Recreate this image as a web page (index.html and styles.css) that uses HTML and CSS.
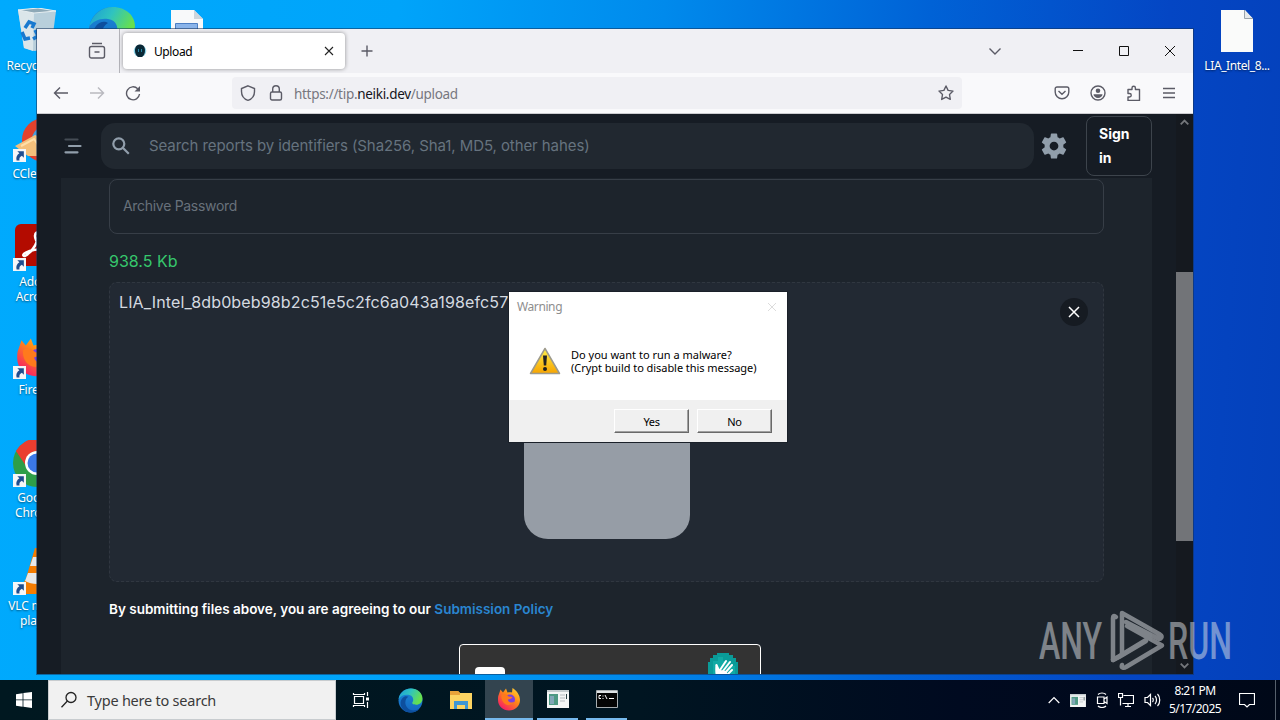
FILE: index.html
```html
<!DOCTYPE html>
<html lang="en">
<head>
  <meta charset="UTF-8" />
  <meta name="viewport" content="width=device-width, initial-scale=1" />
  <title>Upload</title>
  <link rel="stylesheet" href="styles.css">
</head>
<body>
  <svg width="0" height="0" class="defs">
    <defs>
      <linearGradient id="edgeGreen" x1="0" y1="0" x2="1" y2="0.4">
        <stop offset="0" stop-color="#1a9bd8" /><stop offset="0.5" stop-color="#2fc3c0" /><stop offset="1" stop-color="#67e04e" />
      </linearGradient>
      <linearGradient id="edgeBlue" x1="0" y1="0" x2="0" y2="1">
        <stop offset="0" stop-color="#1a8ad8" /><stop offset="1" stop-color="#1565c0" />
      </linearGradient>
      <linearGradient id="fire" x1="1" y1="0" x2="0.2" y2="1">
        <stop offset="0" stop-color="#ffe13a" /><stop offset="0.45" stop-color="#ff8a16" /><stop offset="1" stop-color="#f5156c" />
      </linearGradient>
      <linearGradient id="warn" x1="0" y1="0" x2="0" y2="1">
        <stop offset="0" stop-color="#fff04a" /><stop offset="1" stop-color="#f7a400" />
      </linearGradient>
      <symbol id="edge" viewBox="0 0 48 48">
        <circle cx="24" cy="24" r="23" fill="url(#edgeBlue)" />
        <path d="M1 21C4 8 14 1 25 1c13 0 22 9 22 19 0 8-6 12-12 12-6 0-9-2-7-5 3-4 1-13-8-14C12 12 5 15 1 21z" fill="url(#edgeGreen)" />
        <path d="M20 17c-7 4-8 14-2 21 5 6 15 7 23 2-7 9-20 9-29 3C4 37 3 26 8 20c4-5 9-5 12-3z" fill="#0d4f9e" />
      </symbol>
      <symbol id="firefox" viewBox="0 0 48 48">
        <path d="M4 14l3-9 5 6 6-8 3 8c4-1 7-1 9 0l1-9c8 5 15 14 15 24 0 12-10 21-22 21S2 38 2 26c0-5 0-8 2-12z" fill="url(#fire)" />
        <circle cx="26" cy="25" r="10" fill="#7a3fe0" />
        <path d="M9 16c6-3 11-1 14 3l8 1c-2 4-6 4-9 5 0 5 6 8 13 4-3 7-13 10-20 4-5-4-7-11-6-17z" fill="#ff7a1c" />
      </symbol>
      <symbol id="shortcut" viewBox="0 0 12 12">
        <path d="M0 0h12v12H0z" fill="#f4f6f8" />
        <path d="M4 2h6v6L8.200 6.200C6 7.400 5.700 8.700 6 10.500H3.300C2.500 7.500 3.700 5.500 5.900 4z" fill="#1f4d8f" />
      </symbol>
      <symbol id="appwin" viewBox="0 0 22 18">
        <path d="M0 0h22v18H0z" fill="#f4f6f6" />
        <path d="M0 0h22v2H0z" fill="#c5cdd0" />
        <path d="M2 4h9v11H2z" fill="#4e9a84" />
        <path d="M3 6h4v8H3z" fill="#82a7b8" />
        <path d="M13 5h5M13 8h5M13 11h5" stroke="#b7bcc0" />
        <path d="M19.500 4v5" stroke="#30464a" />
      </symbol>
    </defs>
  </svg>

  <div class="desktop">
    <div class="icons">
      <div class="shortcut">
        <svg width="48" height="48" viewBox="0 0 48 48">
          <path d="M5 2l20-2 18 3-5 38-17 2-10-3z" fill="#b8cfdb" />
          <path d="M5 2l16 3-1 38-9-3z" fill="#dbe6ea" />
          <path d="M5 2l20-2 18 3-22 2z" fill="#8ea9b7" stroke="#e7eff2" />
          <path d="M12 20l4-6 5 2-2 4M9 24l3 7 5-1M22 22l3 6-5 3" fill="none" stroke="#1879cf" stroke-width="3.500" />
        </svg>
        <span>Recycle Bin</span>
      </div>
      <div class="shortcut">
        <svg width="48" height="48" viewBox="0 0 48 48">
          <circle cx="31" cy="24" r="22" fill="#e2412c" />
          <circle cx="33" cy="24" r="14" fill="#4a9fdb" />
          <path d="M2 30l20-11 15 6v15H15z" fill="#f4c07b" />
          <path d="M8 30l13-7 5 7" fill="none" stroke="#ffdfa8" stroke-width="2" />
          <use href="#shortcut" x="0" y="33" width="13" height="13" />
        </svg>
        <span>CCleaner</span>
      </div>
      <div class="shortcut">
        <svg width="48" height="48" viewBox="0 0 48 48">
          <rect x="2" width="46" height="42" rx="6" fill="#b30b00" />
          <path d="M24 8c-5 3 0 12 8 22M24 8c4 8-5 20-12 24-5 0 0-7 22-7" fill="none" stroke="#fff" stroke-width="2.500" />
          <use href="#shortcut" x="0" y="34" width="13" height="13" />
        </svg>
        <span>Adobe<br>Acrobat</span>
      </div>
      <div class="shortcut">
        <svg width="48" height="48" viewBox="0 0 48 48">
          <use href="#firefox" x="0" y="4" width="46" height="41" />
          <use href="#shortcut" x="0" y="34" width="13" height="13" />
        </svg>
        <span>Firefox</span>
      </div>
      <div class="shortcut">
        <svg width="48" height="48" viewBox="0 0 48 48">
          <circle cx="24" cy="23" r="24" fill="#2e9e49" />
          <path d="M3 11A24 24 0 0 1 45 11H24a12 12 0 0 0-11 15z" fill="#ea3d2f" />
          <circle cx="24" cy="23" r="12" fill="#fff" />
          <circle cx="24" cy="23" r="9.500" fill="#3b78e7" />
          <use href="#shortcut" x="0" y="34" width="13" height="13" />
        </svg>
        <span>Google<br>Chrome</span>
      </div>
      <div class="shortcut">
        <svg width="48" height="48" viewBox="0 0 48 48">
          <path d="M12 32h24l7 14H6z" fill="#f57c00" />
          <path d="M22 0h4l11 37c-8 4-18 4-26 0z" fill="#f57c00" />
          <path d="M20 9h9l3 9H17zM15 25h18l3 8c-7 4-17 4-24 0z" fill="#e8e8e8" />
          <use href="#shortcut" x="0" y="34" width="13" height="13" />
        </svg>
        <span>VLC media<br>player</span>
      </div>
    </div>

    <svg class="desk-edge" width="48" height="48"><use href="#edge" width="48" height="48" /></svg>
    <svg class="desk-doc" width="32" height="42" viewBox="0 0 32 42">
      <path d="M0 0h23l9 9v33H0z" fill="#f8f9fa" />
      <path d="M23 0v9h9z" fill="#cdd5dc" />
      <path d="M4.500 13.500h22v16h-22z" fill="#8ab4ea" stroke="#4d7fc4" />
    </svg>

    <div class="shortcut lia">
      <svg width="32" height="42" viewBox="0 0 32 42">
        <path d="M0 0h24l8 9v33H0z" fill="#fafbfa" />
        <path d="M23.500 0v8.500H32" fill="#e6e9ea" stroke="#9aa3ab" />
      </svg>
      <span>LIA_Intel_8...</span>
    </div>

    <div class="window">
      <div class="tabbar">
        <div class="firefox-view">
          <svg width="18" height="18" viewBox="0 0 18 18" class="line">
            <path d="M4 1.500h10M6.500 10h5" />
            <rect x="1.500" y="4.500" width="15" height="11.500" rx="2" />
          </svg>
        </div>
        <div class="tab">
          <svg width="14" height="14" viewBox="0 0 14 14">
            <ellipse cx="7" cy="7" rx="6.300" ry="6" fill="#3ab6d8" opacity="0.600" />
            <path d="M7 .5c3 0 5 2 5 6 0 3-1 5-3 6.500H5C3 11.500 2 9.500 2 6.500c0-4 2-6 5-6z" fill="#0a2836" />
            <path d="M5.500 5v3M8.500 5v3" stroke="#2687a6" />
          </svg>
          <span>Upload</span>
          <svg width="10" height="10" viewBox="0 0 10 10" class="line dark"><path d="M1 1l8 8M9 1L1 9" /></svg>
        </div>
        <svg class="line new-tab" width="12" height="12" viewBox="0 0 12 12"><path d="M6 .5v11M.5 6h11" /></svg>
        <div class="controls">
          <svg class="line" width="14" height="14" viewBox="0 0 14 14"><path d="M1.500 4.500L7 10l5.500-5.500" /></svg>
          <svg class="thin" width="12" height="12" viewBox="0 0 12 12"><path d="M1 5.500h10" /></svg>
          <svg class="thin" width="12" height="12" viewBox="0 0 12 12"><path d="M1.500 1.500h9v9h-9z" /></svg>
          <svg class="thin" width="12" height="12" viewBox="0 0 12 12"><path d="M1 1l10 10M11 1L1 11" /></svg>
        </div>
      </div>

      <div class="navbar">
        <div class="nav-left">
          <svg class="line" width="16" height="16" viewBox="0 0 16 16"><path d="M15 8H1.500M7 2.500L1.500 8 7 13.500" /></svg>
          <svg class="line faded" width="16" height="16" viewBox="0 0 16 16"><path d="M1 8h13.500M9 2.500L14.500 8 9 13.500" /></svg>
          <svg class="line" width="16" height="16" viewBox="0 0 16 16">
            <path d="M14.500 9A6.500 6.500 0 1 1 12.700 3.800" />
            <path d="M15 1v5.500H9.500z" fill="#5b5b66" stroke="none" />
          </svg>
        </div>
        <div class="urlbar">
          <svg class="line" width="16" height="16" viewBox="0 0 16 16"><path d="M8 .8l6.500 2.700v3C14.500 11 12 14 8 15.300 4 14 1.500 11 1.500 6.500v-3z" /></svg>
          <svg class="line" width="14" height="16" viewBox="0 0 14 16">
            <rect x="1.500" y="7" width="11" height="8" rx="1.500" />
            <path d="M3.700 7V4a3.300 3.300 0 0 1 6.600 0v3" />
          </svg>
          <span class="url">https://tip.<b>neiki.dev</b>/upload</span>
          <svg class="line star" width="16" height="16" viewBox="0 0 16 16"><path d="M8 1l2.100 4.400 4.900.7-3.500 3.400.8 4.900L8 12.100l-4.300 2.300.8-4.900L1 6.100l4.900-.7z" stroke-linejoin="round" /></svg>
        </div>
        <div class="nav-right">
          <svg class="line" width="16" height="16" viewBox="0 0 16 16">
            <path d="M3 2h10a1.800 1.800 0 0 1 1.800 1.800V7A6.800 6.800 0 0 1 1.200 7V3.800A1.800 1.800 0 0 1 3 2zM4.500 6L8 9.300 11.500 6" />
          </svg>
          <svg class="line" width="16" height="16" viewBox="0 0 16 16">
            <circle cx="8" cy="8" r="7" />
            <circle cx="8" cy="5.700" r="2.300" fill="#5b5b66" stroke="none" />
            <path d="M3.500 9.300h9c0 2-2 3.700-4.500 3.700s-4.500-1.700-4.500-3.700z" fill="#5b5b66" stroke="none" />
          </svg>
          <svg class="line" width="16" height="16" viewBox="0 0 16 16">
            <path d="M2 4.500h4V3a1.700 1.700 0 0 1 3.400 0v1.500h4.100v11H2V12h1.500a1.700 1.700 0 0 0 0-3.500H2z" stroke-linejoin="round" />
          </svg>
          <svg class="line" width="14" height="14" viewBox="0 0 14 14"><path d="M1 2.500h12M1 7h12M1 11.500h12" /></svg>
        </div>
      </div>

      <div class="page">
        <div class="content">
          <header>
            <svg class="menu" width="18" height="16" viewBox="0 0 18 16">
              <path d="M1.500 1.500h12" stroke="#454c55" />
              <path d="M5 8h11.500M1.500 14.300h12" stroke="#919eab" />
            </svg>
            <div class="search">
              <svg width="18" height="18" viewBox="0 0 18 18" fill="none" stroke="#919eab" stroke-width="2.200">
                <circle cx="6.800" cy="6.800" r="5.500" /><path d="M10.800 10.800l6 6" />
              </svg>
              <span>Search reports by identifiers (Sha256, Sha1, MD5, other hahes)</span>
            </div>
            <svg class="gear" width="30" height="30" viewBox="0 0 24 24">
              <path fill="#919eab" d="M19.430 12.980c.04-.32.07-.64.07-.98s-.03-.66-.07-.98l2.110-1.650c.19-.15.24-.42.12-.64l-2-3.460c-.12-.22-.39-.3-.61-.22l-2.490 1c-.52-.4-1.080-.73-1.690-.98l-.38-2.650C14.460 2.180 14.250 2 14 2h-4c-.25 0-.46.18-.49.42l-.38 2.650c-.61.25-1.170.59-1.690.98l-2.490-1c-.23-.09-.49 0-.61.22l-2 3.460c-.13.22-.07.49.12.64l2.110 1.650c-.04.32-.07.65-.07.98s.03.66.07.98l-2.110 1.650c-.19.15-.24.42-.12.64l2 3.460c.12.22.39.3.61.22l2.490-1c.52.4 1.080.73 1.690.98l.38 2.650c.03.24.24.42.49.42h4c.25 0 .46-.18.49-.42l.38-2.650c.61-.25 1.170-.59 1.690-.98l2.490 1c.23.09.49 0 .61-.22l2-3.460c.12-.22.07-.49-.12-.64l-2.110-1.650zM12 15.500c-1.930 0-3.500-1.570-3.500-3.500s1.570-3.500 3.500-3.500 3.500 1.570 3.500 3.500-1.570 3.500-3.500 3.500z" />
            </svg>
            <a class="sign-in">Sign in</a>
          </header>

          <main>
            <div class="password">Archive Password</div>
            <div class="size">938.5 Kb</div>
            <div class="dropzone">
              <div class="file-row">
                <span class="file-name">LIA_Intel_8db0beb98b2c51e5c2fc6a043a198efc57</span>
                <span class="remove">
                  <svg width="12" height="12" viewBox="0 0 12 12" fill="none" stroke="#fff" stroke-width="1.500"><path d="M1 1l10 10M11 1L1 11" /></svg>
                </span>
              </div>
              <div class="preview"></div>
            </div>
            <p class="policy">By submitting files above, you are agreeing to our <a>Submission Policy</a></p>
            <div class="captcha">
              <div class="checkbox"></div>
              <svg width="34" height="34" viewBox="0 0 34 34">
                <path d="M11 1h12v2h4v3h3v4h2v14H2V10h2V6h3V3h4z" fill="#0a9b98" />
                <path d="M7 9h5V5h5v4h6v5h6v10H7z" fill="#12aaa5" />
                <path d="M10.500 13l2.500 6M14 18l6-9M17 19l7-9M19 21l7-8M20 24l6-6" stroke="#fff" stroke-width="2" stroke-linecap="round" />
                <path d="M9.500 13c2 1 3 3 4.500 5l6 1 2 4-4 5h-6c-3-3-3-10-2.500-15z" fill="#fff" />
              </svg>
            </div>
          </main>
        </div>
        <div class="scrollbar">
          <svg width="9" height="6" viewBox="0 0 9 6"><path d="M.7 5.300L4.500 1.500l3.800 3.800" /></svg>
          <div class="thumb"></div>
          <svg width="9" height="6" viewBox="0 0 9 6"><path d="M.7.7l3.800 3.800L8.300.7" /></svg>
        </div>
      </div>
    </div>

    <div class="dialog">
      <div class="dialog-title">
        <span>Warning</span>
        <svg width="10" height="10" viewBox="0 0 10 10"><path d="M1 1l8 8M9 1L1 9" stroke="#dcdcdc" /></svg>
      </div>
      <div class="dialog-body">
        <svg width="32" height="28" viewBox="0 0 32 28">
          <path d="M16 1.500L30.500 26.500h-29z" fill="url(#warn)" stroke="#9d9a8c" stroke-width="1.500" stroke-linejoin="round" />
          <path d="M14 8.500h4l-.8 10h-2.400z" fill="#222" />
          <circle cx="16" cy="22" r="2" fill="#222" />
        </svg>
        <p>Do you want to run a malware?<br><span>(Crypt build to disable this message)</span></p>
      </div>
      <div class="dialog-buttons">
        <button>Yes</button>
        <button>No</button>
      </div>
    </div>

    <svg class="watermark" width="210" height="70" viewBox="0 0 210 70">
      <text x="1" y="51" textLength="63" lengthAdjust="spacingAndGlyphs">ANY</text>
      <g fill="none" stroke-width="4.500" stroke-linejoin="round" stroke-linecap="round">
        <path d="M84 46V5l38 21.500c3 2 1 5.500-2 4L88 14" />
        <path d="M78 9c-2-2-3-1-3 1v42l33-20M84 57c-1 3 2 3.500 4 2l36-21.500L89 18" />
        <path d="M75 52l6-3 27-16" />
      </g>
      <text x="130" y="51" textLength="64" lengthAdjust="spacingAndGlyphs">RUN</text>
    </svg>

    <div class="taskbar">
      <div class="start">
        <svg width="16" height="16" viewBox="0 0 16 16" fill="#fff"><path d="M0 2.200L6.600 1.200v6.300H0zM7.400 1.100L16 0v7.500H7.400zM0 8.300h6.600v6.400L0 13.800zM7.400 8.300H16V16l-8.600-1.200z" /></svg>
      </div>
      <div class="task-search">
        <svg width="18" height="18" viewBox="0 0 18 18" fill="none" stroke="#222" stroke-width="1.300"><circle cx="11" cy="6.500" r="5" /><path d="M7.400 10L1.500 16.300" /></svg>
        <span>Type here to search</span>
      </div>
      <div class="task">
        <svg width="18" height="16" viewBox="0 0 18 16" fill="none" stroke="#fff" stroke-width="1.200"><path d="M2.500 4.500h9v7h-9zM1.500 1v1.500h11V1M1.500 15v-1.500h11V15M15.500 0v4M15.500 10v6" /><path d="M14 5.500h3v3h-3z" fill="#fff" stroke="none" /></svg>
      </div>
      <div class="task wide"><svg width="25" height="25"><use href="#edge" width="25" height="25" /></svg></div>
      <div class="task">
        <svg width="22" height="20" viewBox="0 0 22 20">
          <path d="M0 1h8l2 2h12v16H0z" fill="#fcd462" /><path d="M0 1h8l2 2v2H0z" fill="#e8a33a" />
          <path d="M4 19v-8h14v8h-3v-4H7v4z" fill="#3f97d4" />
        </svg>
      </div>
      <div class="task active"><svg width="24" height="24"><use href="#firefox" width="24" height="24" /></svg></div>
      <div class="task open"><svg width="22" height="18"><use href="#appwin" width="22" height="18" /></svg></div>
      <div class="task open">
        <svg width="22" height="18" viewBox="0 0 22 18">
          <path d="M.5.500h21v17H.5z" fill="#050505" stroke="#a7adb0" /><path d="M1 1h20v2H1z" fill="#dfe3e5" />
          <path d="M5 5.500H3v3h2M7 5.500v1M7 8v1M9 5l2 4M13 8.500h5" stroke="#fff" fill="none" />
        </svg>
      </div>
      <div class="tray">
        <svg width="12" height="8" viewBox="0 0 12 8"><path d="M.7 7L6 1.500 11.300 7" /></svg>
        <svg width="16" height="13"><use href="#appwin" width="16" height="13" /></svg>
        <svg width="12" height="16" viewBox="0 0 12 16"><path d="M1.500 5h6.500v6.500H1.500zM8 7l3-2v6.500l-3-2M2 2.500c2-2 6-2 8 0M2 14c2 2 6 2 8 0" /></svg>
        <svg width="16" height="14" viewBox="0 0 16 14"><path d="M5.500 2.500h10v8h-11M.5.500h4v4h-4zM2.500 4.500v8M10 10.500v3M7 13.500h6" /></svg>
        <svg width="17" height="14" viewBox="0 0 17 14"><path d="M1 4.500h2.500L6.500 1.500v11L3.500 9.500H1zM8.500 5c1 1 1 3 0 4M11 3c2 2 2 6 0 8M13.500 1c3 3 3 9 0 12" /></svg>
        <div class="clock">8:21 PM<br>5/17/2025</div>
        <svg width="16" height="16" viewBox="0 0 16 16"><path d="M.5 1.500h15v11h-5L8 15l-2.500-2.500h-5z" /></svg>
        <div class="show-desktop"></div>
      </div>
    </div>
  </div>
</body>
</html>
```
FILE: styles.css
```css
* {
  box-sizing: border-box;
}
body {
  margin: 0;
  font-family: "Noto Sans", "Open Sans", sans-serif;
  overflow: hidden;
}
svg {
  display: block;
  flex-shrink: 0;
}
.defs {
  position: absolute;
}
.desktop {
  position: relative;
  width: 1280px;
  height: 720px;
  overflow: hidden;
  background: linear-gradient(94deg, #00aafd 0%, #00a4fa 30%, #008aec 50%, #0062d6 70%, #0446c4 88%, #0440ba 100%);
}

/* desktop icons */
.icons {
  display: grid;
  grid-auto-rows: 108px;
  width: 74px;
  padding-top: 8px;
}
.shortcut {
  display: flex;
  flex-direction: column;
  align-items: center;
  font-size: 12px;
  line-height: 15px;
  letter-spacing: -0.2px;
  text-align: center;
  white-space: nowrap;
  color: #fff;
  text-shadow: 0 1px 2px rgba(0,0,0,0.5);
}
.icons svg {
  margin-bottom: 2px;
}
.desk-edge {
  position: absolute;
  left: 88px;
  top: 6px;
}
.desk-doc {
  position: absolute;
  left: 171px;
  top: 10px;
}
.lia {
  position: absolute;
  left: 1200px;
  top: 10px;
  width: 74px;
}
.lia svg {
  margin-bottom: 6px;
}
.lia span {
  letter-spacing: -0.4px;
}

/* browser */
.window {
  position: absolute;
  left: 36px;
  top: 28px;
  width: 1158px;
  height: 647px;
  display: flex;
  flex-direction: column;
  border: 1px solid rgba(20,50,90,0.55);
}
.line {
  fill: none;
  stroke: #5b5b66;
  stroke-width: 1.4;
}
.dark {
  stroke: #222;
  stroke-width: 1.1;
}
.faded {
  opacity: 0.4;
}
.thin {
  fill: none;
  stroke: #111;
}
.tabbar {
  display: flex;
  align-items: center;
  height: 44px;
  background: #f0f0f4;
}
.firefox-view {
  display: flex;
  align-items: center;
  justify-content: flex-end;
  width: 83px;
  height: 44px;
  padding-right: 13px;
  border-right: 1px solid #b4b4ba;
}
.tab {
  display: flex;
  align-items: center;
  width: 222px;
  height: 36px;
  margin-left: 3px;
  padding: 0 11px 0 10px;
  border-radius: 4px;
  background: #fff;
  box-shadow: 0 0 4px rgba(0,0,0,0.4);
  font-size: 12px;
}
.tab span {
  flex: 1;
  margin-left: 7px;
  letter-spacing: -0.4px;
}
.new-tab {
  margin-left: 16px;
}
.controls {
  display: flex;
  align-items: center;
  gap: 34px;
  margin-left: auto;
  padding-right: 17px;
}
.controls svg:first-child {
  margin-right: 36px;
}
.navbar {
  display: flex;
  align-items: center;
  height: 41px;
  background: #f9f9fb;
  border-bottom: 1px solid #ccccd0;
}
.nav-left {
  display: flex;
  gap: 20px;
  width: 195px;
  padding-left: 16px;
}
.urlbar {
  display: flex;
  align-items: center;
  width: 730px;
  height: 32px;
  padding: 0 8px;
  border-radius: 4px;
  background: #f0f0f4;
}
.urlbar svg + svg {
  margin-left: 13px;
}
.url {
  flex: 1;
  margin: 1px 0 0 11px;
  font-size: 13.5px;
  letter-spacing: -0.3px;
  color: #77777f;
}
.url b {
  font-weight: 400;
  color: #15141a;
}
.nav-right {
  display: flex;
  align-items: center;
  gap: 20px;
  margin-left: auto;
  padding-right: 17px;
}

/* page */
.page {
  display: flex;
  flex: 1;
  min-height: 0;
  background: #161c24;
  font-family: Inter, sans-serif;
}
.content {
  width: 1139px;
  overflow: hidden;
}
header {
  display: flex;
  align-items: center;
  height: 64px;
  padding-left: 27px;
}
.menu {
  fill: none;
  stroke-width: 2.2;
  stroke-linecap: round;
}
.search {
  display: flex;
  align-items: center;
  width: 933px;
  height: 46px;
  margin-left: 19px;
  padding-left: 11px;
  border-radius: 14px;
  background: #212830;
  color: #66737f;
  font-size: 15px;
}
.search span {
  margin: -1px 0 0 19px;
  letter-spacing: -0.08px;
}
.gear {
  margin-left: 5px;
}
.sign-in {
  width: 66px;
  height: 60px;
  margin-left: 17px;
  padding: 5px 20px 0 12px;
  border: 1px solid #3d444c;
  border-radius: 8px;
  color: #fff;
  font-size: 14px;
  font-weight: 700;
  line-height: 24px;
}
main {
  height: 500px;
  margin: 0 24px;
  padding: 1px 48px 0;
  background: #1d242c;
}
.password {
  height: 55px;
  padding-left: 13px;
  border: 1px solid #373e47;
  border-radius: 8px;
  color: #68717b;
  font-size: 14px;
  line-height: 52px;
  letter-spacing: -0.3px;
}
.size {
  height: 48px;
  padding-top: 15px;
  color: #36c76c;
  font-size: 16px;
  line-height: 24px;
}
.dropzone {
  height: 300px;
  border: 1px dashed #303740;
  border-radius: 8px;
  background: #222933;
}
.file-row {
  display: flex;
  justify-content: space-between;
  padding: 7px 15px 0 9px;
  color: #d5dae0;
  font-size: 16px;
  line-height: 24px;
}
.file-name {
  letter-spacing: 0.14px;
}
.remove {
  display: flex;
  align-items: center;
  justify-content: center;
  width: 28px;
  height: 28px;
  margin-top: 8px;
  border-radius: 50%;
  background: #161b22;
}
.preview {
  width: 166px;
  height: 166px;
  margin: 47px auto 0 413.5px;
  border-radius: 24px;
  background: #969da6;
}
.policy {
  margin: 15px 0 0;
  color: #fff;
  font-size: 13.5px;
  font-weight: 600;
  line-height: 24px;
}
.policy a {
  color: #2a86d1;
}
.captcha {
  display: flex;
  justify-content: space-between;
  width: 302px;
  height: 76px;
  margin: 23px 0 0 350px;
  padding: 7px 20px 0 15px;
  border: 1px solid #fff;
  border-radius: 4px;
  background: #333;
}
.checkbox {
  width: 30px;
  height: 30px;
  margin-top: 15px;
  border-radius: 4px;
  background: #fff;
}
.scrollbar {
  display: flex;
  flex-direction: column;
  align-items: center;
  justify-content: space-between;
  width: 17px;
  padding: 5px 0;
  background: #15191f;
}
.scrollbar path {
  fill: none;
  stroke: #74777b;
  stroke-width: 1.8;
}
.thumb {
  width: 17px;
  height: 269px;
  margin-top: 24px;
  background: #727478;
}

/* message box */
.dialog {
  position: absolute;
  left: 509px;
  top: 292px;
  width: 278px;
  height: 150px;
  background: #fff;
  box-shadow: 0 0 0 1px #1a2029;
}
.dialog-title {
  display: flex;
  align-items: center;
  justify-content: space-between;
  height: 29px;
  padding: 0 10px 0 8px;
  color: #8e8e8e;
  font-size: 12px;
  letter-spacing: -0.4px;
}
.dialog-body {
  display: flex;
  align-items: center;
  height: 79px;
  padding-left: 20px;
}
.dialog-body p {
  margin: 1px 0 0 10px;
  font-size: 11px;
  line-height: 13px;
  white-space: nowrap;
}
.dialog-body p span {
  letter-spacing: -0.05px;
}
.dialog-buttons {
  display: flex;
  justify-content: flex-end;
  gap: 8px;
  height: 42px;
  padding: 9px 15px 0 0;
  background: #f0f0f0;
}
button {
  width: 75px;
  height: 24px;
  padding: 0;
  border: 1px solid;
  border-color: #fff #696969 #696969 #fff;
  box-shadow: inset -1px -1px #a0a0a0;
  background: #f0f0f0;
  font-family: inherit;
  font-size: 11px;
  letter-spacing: -0.3px;
}

.watermark {
  position: absolute;
  left: 1038px;
  top: 608px;
  opacity: 0.5;
}
.watermark text {
  font-family: Roboto, sans-serif;
  font-size: 52px;
  font-weight: 500;
  fill: #dfe2e6;
}
.watermark g {
  stroke: #dfe2e6;
}

/* taskbar */
.taskbar {
  position: absolute;
  left: 0;
  top: 680px;
  display: flex;
  width: 1280px;
  height: 40px;
  background: linear-gradient(90deg, #001820, #001521 50%, #000a20 75%, #000818);
}
.start,
.task {
  display: flex;
  align-items: center;
  justify-content: center;
  width: 48px;
  height: 40px;
}
.task {
  width: 49px;
}
.wide {
  width: 51px;
}
.task-search {
  display: flex;
  align-items: center;
  gap: 9px;
  width: 288px;
  padding-left: 11px;
  border: 1px solid #c8cccf;
  background: #f1f1f1;
  color: #3a3a3a;
  font-size: 14.5px;
  letter-spacing: -0.23px;
}
.active {
  width: 48px;
  background: #33444f;
  border-bottom: 2px solid #76b9ed;
}
.open {
  width: 41px;
  margin: 0 4px;
  border-bottom: 2px solid #76b9ed;
}
.tray {
  display: flex;
  align-items: center;
  margin-left: auto;
  gap: 10px;
}
.tray path {
  stroke-width: 1.2;
}
.tray > svg > path {
  fill: none;
  stroke: #fff;
}
.clock {
  width: 52px;
  margin: 0 8px 0 -2px;
  color: #fff;
  font-size: 12px;
  line-height: 18px;
  letter-spacing: -0.55px;
  text-align: center;
  white-space: nowrap;
}
.show-desktop {
  width: 5px;
  height: 40px;
  margin-left: 10px;
  border-left: 1px solid #56606c;
}
```
